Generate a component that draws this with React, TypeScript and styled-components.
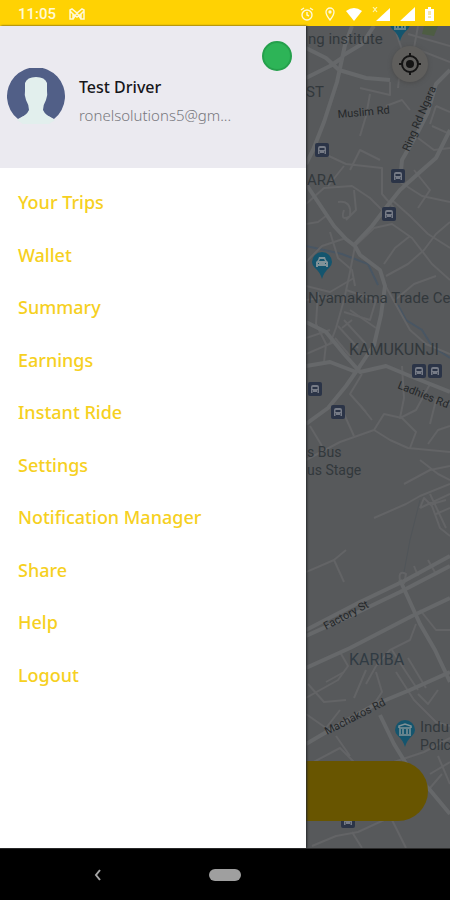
import React from "react";
import styled, { createGlobalStyle } from "styled-components";

const GlobalStyle = createGlobalStyle`
  *, *::before, *::after { box-sizing: border-box; }
  body { margin: 0; background: #000; font-family: "Noto Sans", "Open Sans", sans-serif; }
  button { font: inherit; border: 0; padding: 0; cursor: pointer; }
`;

const Screen = styled.div`
  display: flex;
  flex-direction: column;
  min-height: 100vh;
`;

const StatusBar = styled.header`
  display: flex;
  align-items: center;
  justify-content: space-between;
  height: 26px;
  padding: 2px 16px 0 18px;
  background: #ffd203;
  color: #fff9d8;
`;

const StatusGroup = styled.div<{ $gap: number }>`
  display: flex;
  align-items: center;
  gap: ${(p) => p.$gap}px;
`;

const Clock = styled.time`
  font: 500 15px/20px Roboto, sans-serif;
`;

const Content = styled.div`
  position: relative;
  display: flex;
  flex: 1;
  background: #58595b;
`;

const Drawer = styled.aside`
  display: flex;
  flex-direction: column;
  width: 68%;
  background: #fff;
  box-shadow: 1px 0 2px #222527;
  z-index: 1;
`;

const Profile = styled.section`
  display: flex;
  flex-direction: column;
  height: 142px;
  padding: 15px 14px 0 7px;
  background: #ebeaf0;
`;

const Online = styled.span`
  align-self: flex-end;
  width: 30px;
  height: 30px;
  border: 2px solid #25a04c;
  border-radius: 50%;
  background: #2db457;
`;

const Person = styled.div`
  display: flex;
  align-items: flex-start;
  gap: 14px;
  margin-top: -3px;
`;

const PersonText = styled.div`
  min-width: 0;
  padding-top: 5px;
`;

const Name = styled.h1`
  margin: 0;
  color: #16161a;
  font-size: 16px;
  font-weight: 500;
  line-height: 28px;
`;

const Email = styled.p`
  margin: 0;
  color: #77777d;
  font-size: 15px;
  font-weight: 300;
  line-height: 28px;
`;

const Menu = styled.ul`
  display: grid;
  grid-auto-rows: 1fr;
  align-items: center;
  min-height: 525px;
  margin: 8px 0 0;
  padding: 0 18px;
  list-style: none;
`;

const MenuLink = styled.a`
  color: #f6d021;
  font-size: 18px;
  font-weight: 500;
  line-height: 28px;
  text-decoration: none;
`;

const MapArea = styled.main`
  position: relative;
  flex: 1;
  overflow: hidden;
`;

const MapDrawing = styled.svg`
  position: absolute;
  inset: 0;
  width: 100%;
  height: 100%;
`;

const LocateButton = styled.button`
  position: absolute;
  top: 20px;
  right: 22px;
  display: grid;
  place-items: center;
  width: 36px;
  height: 36px;
  border-radius: 50%;
  background: #5f5e5c;
  box-shadow: 0 1px 4px #4a4a4a;
  color: #141414;
`;

const ActionButton = styled.button`
  position: absolute;
  left: -30px;
  right: 22px;
  bottom: 27px;
  height: 60px;
  border-radius: 30px;
  background: #685500;
`;

const NavBar = styled.footer`
  display: grid;
  grid-template-columns: 1fr auto 1fr;
  align-items: center;
  height: 52px;
  border-top: 1px solid #2c2c2c;
  background: #000;
`;

const BackButton = styled.button`
  display: grid;
  place-items: center;
  justify-self: center;
  width: 24px;
  height: 24px;
  margin-right: 14px;
  background: none;
  color: #a5a5a5;
`;

const HomeButton = styled.button`
  width: 32px;
  height: 12px;
  border-radius: 6px;
  background: #9f9f9f;
`;

const menu = [
  "Your Trips", "Wallet", "Summary", "Earnings", "Instant Ride",
  "Settings", "Notification Manager", "Share", "Help", "Logout",
];

const mainRoads = [
  "M352 26 L345 45 L337 82 L324 122 L313 150 L306 164",
  "M306 48 L326 58 L339 70 M306 78 L330 66 L342 58",
  "M342 56 L362 44 L374 26 M339 70 L366 78 L390 80",
  "M450 70 L436 84 L428 112 L418 132 L402 160 L400 182",
  "M450 130 L436 158 L420 172 L400 190 L388 205 L372 226 L355 244",
  "M306 184 L320 205 L334 226 L346 239 L355 246 L360 255 L380 270 L385 286 L381 315 L374 345 L360 366 L346 386 L328 408 L306 424",
  "M306 322 L326 332 L344 354 L360 372 L386 366 L410 376 L450 392",
  "M306 366 L330 362 L356 372",
  "M306 630 L360 602 L404 581 L450 556 M306 636 L350 616 L400 592 L450 566",
  "M306 668 L350 648 L412 616 L450 598",
  "M400 580 L410 602 L420 624 L435 650 L450 682",
  "M306 744 L340 724 L376 704 L410 690 L450 672",
  "M380 715 L394 744 L410 770 L430 790 L450 814",
];

const sideRoads = [
  "M360 88 L390 95 L390 82 M394 26 L402 50 L398 88 M418 26 L414 48 L450 62",
  "M370 94 L366 116 L360 136 M408 34 L450 46 M386 106 L402 100 L410 110",
  "M436 106 L450 112 M430 124 L436 106 M432 126 L450 134 M418 138 L434 150 L450 148",
  "M316 150 L346 164 L382 168 L382 194 L394 208 M350 170 L360 150 L380 160",
  "M306 204 L324 188 L352 186 L370 198 L386 214 M328 186 L344 166",
  "M338 202 Q352 200 350 216 Q340 222 344 210 M354 190 L356 210 L346 220",
  "M306 224 L318 222 L326 216 M392 200 L410 216 L428 234 L450 248",
  "M400 182 L422 196 L450 202 M414 170 L430 190 L418 208",
  "M306 262 L322 246 L346 238 M355 246 L374 228 L392 224 L412 238 L432 264 L450 280",
  "M450 222 L436 234 L424 250 L408 264 L386 276 M410 236 L395 248 L384 264",
  "M330 232 L338 258 L352 270 L355 286 M306 286 L330 292 L354 278",
  "M355 246 L350 272 L344 300 L336 328 L330 344",
  "M306 300 L334 296 M346 290 L376 300 L370 320 L344 312",
  "M344 320 L366 344 M338 326 L358 348 M350 310 L376 328 M335 338 L350 356 M342 328 L352 320",
  "M306 338 L330 330 M306 354 L334 342 M318 292 L316 324 L326 344 L324 362",
  "M385 285 L410 330 L426 344 L450 354 M395 300 L414 284 L436 276",
  "M402 366 L404 398 L400 418 L416 410 L430 384 M362 374 L350 394 L366 412",
  "M306 460 L340 442 L374 430 L390 440 L408 448 L450 452 M374 430 L384 414 L402 418 L416 432 L410 448",
  "M344 414 L354 436 M310 426 L322 446 M360 405 L372 420",
  "M428 444 L438 430 L450 426 M430 424 L436 400 L450 404",
  "M374 518 L406 504 L420 496 L450 484 M404 484 L430 470 L450 466 M420 460 L438 474 L450 480",
  "M420 508 L450 494 M420 508 L424 498 L432 506 L440 528 L450 536 M432 504 L446 500 M436 514 L450 508 M430 494 L446 528",
  "M306 572 L334 560 L346 550 M334 560 L344 582",
  "M400 580 Q398 570 406 574 L404 584 M414 566 L418 576 M428 560 L436 574",
  "M420 610 L436 630 L450 630 M416 624 L410 640 L390 650 L376 666",
  "M340 652 L348 666 L338 680 L306 698 M376 666 L366 684 M392 650 L406 672 L418 690 M408 658 L426 688",
  "M308 684 L324 702 L346 700 M326 682 L344 672 M366 670 L354 698 M306 714 L326 728 L340 710",
  "M376 672 L382 692 L374 704 M396 672 L414 700 L436 722 L450 726",
  "M418 694 L428 704 L438 690 M306 766 L340 748 L356 764 M336 736 L350 756",
  "M394 762 L424 752 L450 738 M430 774 L450 762 M438 756 L450 784 M430 788 L442 774",
  "M312 846 L336 836 L358 832 L384 820 L406 810 M352 832 L362 848 M392 820 L406 848",
];

interface MapLabel { text: string; x: number; y: number; size: number; rotate?: number; tone?: string; }

const labels: MapLabel[] = [
  { text: "ng institute", x: 308, y: 44, size: 15 },
  { text: "ST", x: 306, y: 97, size: 15 },
  { text: "ARA", x: 307, y: 185, size: 15 },
  { text: "Muslim Rd", x: 338, y: 118, size: 11, rotate: -5, tone: "#242729" },
  { text: "Ring Rd Ngara", x: 409, y: 152, size: 11, rotate: -67, tone: "#242729" },
  { text: "Nyamakima Trade Ce", x: 308, y: 303, size: 15 },
  { text: "KAMUKUNJI", x: 349, y: 355, size: 16 },
  { text: "Ladhies Rd", x: 397, y: 388, size: 11, rotate: 22, tone: "#242729" },
  { text: "s Bus", x: 307, y: 457, size: 14 },
  { text: "us Stage", x: 307, y: 475, size: 14 },
  { text: "Factory St", x: 326, y: 630, size: 11, rotate: -28, tone: "#242729" },
  { text: "KARIBA", x: 349, y: 665, size: 16, tone: "#303b43" },
  { text: "Machakos Rd", x: 327, y: 735, size: 11, rotate: -27, tone: "#242729" },
  { text: "Indu", x: 420, y: 732, size: 15 },
  { text: "Polic", x: 420, y: 750, size: 14 },
];

const busStops = [[322, 150], [398, 176], [389, 214], [419, 371], [435, 371], [315, 389], [338, 412], [348, 821]];

const Bus = ({ x, y }: { x: number; y: number }) => (
  <g transform={`translate(${x} ${y})`}>
    <rect x="-7" y="-7" width="14" height="14" rx="2" fill="#2b3447" />
    <path d="M-4 4V-2Q-4-4-2-4H2Q4-4 4-2V4H2.5V3H-2.5V4Z" fill="#767b86" />
    <path d="M-2.5-2H2.5V0H-2.5Z" fill="#2b3447" />
    <path d="M-3 2H-2M2 2H3" stroke="#2b3447" />
  </g>
);

const Pin = ({ x, y, kind }: { x: number; y: number; kind: "car" | "bank" }) => (
  <g transform={`translate(${x} ${y})`}>
    <path d="M0 17Q-2 10-7 6Q-10 3-10 0A10 10 0 0 1 10 0Q10 3 7 6Q2 10 0 17Z" fill="#14556e" />
    {kind === "car" ? (
      <>
        <path d="M-6 5V0L-4-2L-3-5H3L4-2L6 0V5H4V4H-4V5Z" fill="#7f9298" />
        <path d="M-2-3H2L3-1H-3ZM-4 1H-3V2H-4ZM3 1H4V2H3Z" fill="#14556e" />
      </>
    ) : (
      <path d="M-6-2V-4L0-6L6-4V-2M-5-1V4M-2-1V4M2-1V4M5-1V4M-6 5H6M-6-2H6" fill="none" stroke="#7f9298" strokeWidth="1.5" />
    )}
  </g>
);

const CityMap = () => (
  <MapDrawing viewBox="306 26 144 822" preserveAspectRatio="xMinYMin slice" role="img" aria-label="City map">
    <path d="M306 26H450V848H306Z" fill="#57595b" />
    <path d="M424 26H438L434 36L422 34Z" fill="#4e5d43" />
    <path d="M306 246L342 254L368 264L378 285M398 305L406 320L422 330L432 346L450 358" fill="none" stroke="#495663" strokeWidth="2" />
    <path d="M420 500L410 540L404 572" fill="none" stroke="#505559" />
    <g fill="none" stroke="#636466" strokeWidth="2" strokeLinejoin="round">
      {sideRoads.map((d) => <path key={d} d={d} />)}
    </g>
    <g fill="none" stroke="#66686a" strokeWidth="4" strokeLinejoin="round">
      {mainRoads.map((d) => <path key={d} d={d} />)}
    </g>
    {busStops.map(([x, y]) => <Bus key={`${x}-${y}`} x={x} y={y} />)}
    <Pin x={400} y={24} kind="bank" />
    <Pin x={322} y={262} kind="car" />
    <Pin x={405} y={730} kind="bank" />
    <g fontFamily="Roboto, sans-serif">
      {labels.map((l) => (
        <text key={l.text} fontSize={l.size} fill={l.tone ?? "#32383c"} transform={`translate(${l.x} ${l.y}) rotate(${l.rotate ?? 0})`}>
          {l.text}
        </text>
      ))}
    </g>
  </MapDrawing>
);

const Avatar = () => (
  <svg width="58" height="58" viewBox="0 0 58 58" role="img" aria-label="Profile picture">
    <path d="M11 51A29 29 0 1 1 47 51Q29 40 11 51Z" fill="#515f87" />
    <path d="M10 52Q20 47 22 42Q22 37 19 32Q17 27 18 23V15Q20 9 29 9Q38 9 40 15V23Q41 27 39 32Q36 37 36 42Q38 47 48 52L42 56H16Z" fill="#e2efed" />
  </svg>
);

export default function App() {
  return (
    <Screen>
      <GlobalStyle />
      <StatusBar>
        <StatusGroup $gap={13}>
          <Clock>11:05</Clock>
          <svg width="16" height="12" viewBox="0 0 16 12" fill="none" stroke="currentColor" strokeWidth="1.5" aria-hidden="true">
            <path d="M1 11V2L3 1L8 5L13 1L15 2V11H12V6L8 9L4 6V11ZM4 6L1 3M12 6L15 3M4 11L8 5L12 11" />
          </svg>
        </StatusGroup>
        <StatusGroup $gap={10}>
          <svg width="14" height="14" viewBox="0 0 14 14" fill="none" stroke="currentColor" strokeWidth="1.4" aria-hidden="true">
            <circle cx="7" cy="8" r="5" /><path d="M7 5V8L9 9M1 3L4 1M13 3L10 1" />
          </svg>
          <svg width="12" height="14" viewBox="0 0 12 14" fill="none" stroke="currentColor" strokeWidth="1.3" aria-hidden="true">
            <path d="M6 13Q2 8 2 5A4 4 0 0 1 10 5Q10 8 6 13Z" /><circle cx="6" cy="5" r="1" fill="currentColor" />
          </svg>
          <svg width="16" height="14" viewBox="0 0 16 14" fill="#fff" aria-hidden="true"><path d="M0 4Q8-2 16 4L8 14Z" /></svg>
          <svg width="18" height="14" viewBox="0 0 18 14" fill="#fff" aria-hidden="true">
            <path d="M18 1V14H4Z" /><path d="M1 0L5 5M5 0L1 5" stroke="#fff5ad" strokeWidth="1.2" />
          </svg>
          <svg width="15" height="14" viewBox="0 0 15 14" fill="#fff" aria-hidden="true"><path d="M15 0V14H0Z" /></svg>
          <svg width="9" height="14" viewBox="0 0 9 14" aria-hidden="true">
            <path d="M0 2H3V0H6V2H9V14H0Z" fill="#fff" /><path d="M3 5H6M3 7H6M3 10H6" stroke="#f2d44c" />
          </svg>
        </StatusGroup>
      </StatusBar>
      <Content>
        <Drawer>
          <Profile>
            <Online role="img" aria-label="Online" />
            <Person>
              <Avatar />
              <PersonText>
                <Name>Test Driver</Name>
                <Email>ronelsolutions5@gm...</Email>
              </PersonText>
            </Person>
          </Profile>
          <nav aria-label="Main menu">
            <Menu>
              {menu.map((item) => (
                <li key={item}><MenuLink href="#">{item}</MenuLink></li>
              ))}
            </Menu>
          </nav>
        </Drawer>
        <MapArea>
          <CityMap />
          <LocateButton aria-label="My location">
            <svg width="24" height="24" viewBox="0 0 24 24" fill="none" stroke="currentColor" strokeWidth="2" aria-hidden="true">
              <circle cx="12" cy="12" r="8" /><circle cx="12" cy="12" r="4" fill="currentColor" stroke="none" />
              <path d="M12 1V4M12 20V23M1 12H4M20 12H23" />
            </svg>
          </LocateButton>
          <ActionButton aria-label="Go online" />
        </MapArea>
      </Content>
      <NavBar>
        <BackButton aria-label="Back">
          <svg width="8" height="12" viewBox="0 0 8 12" fill="none" stroke="currentColor" strokeWidth="2" aria-hidden="true"><path d="M6 1L2 6L6 11" /></svg>
        </BackButton>
        <HomeButton aria-label="Home" />
      </NavBar>
    </Screen>
  );
}
